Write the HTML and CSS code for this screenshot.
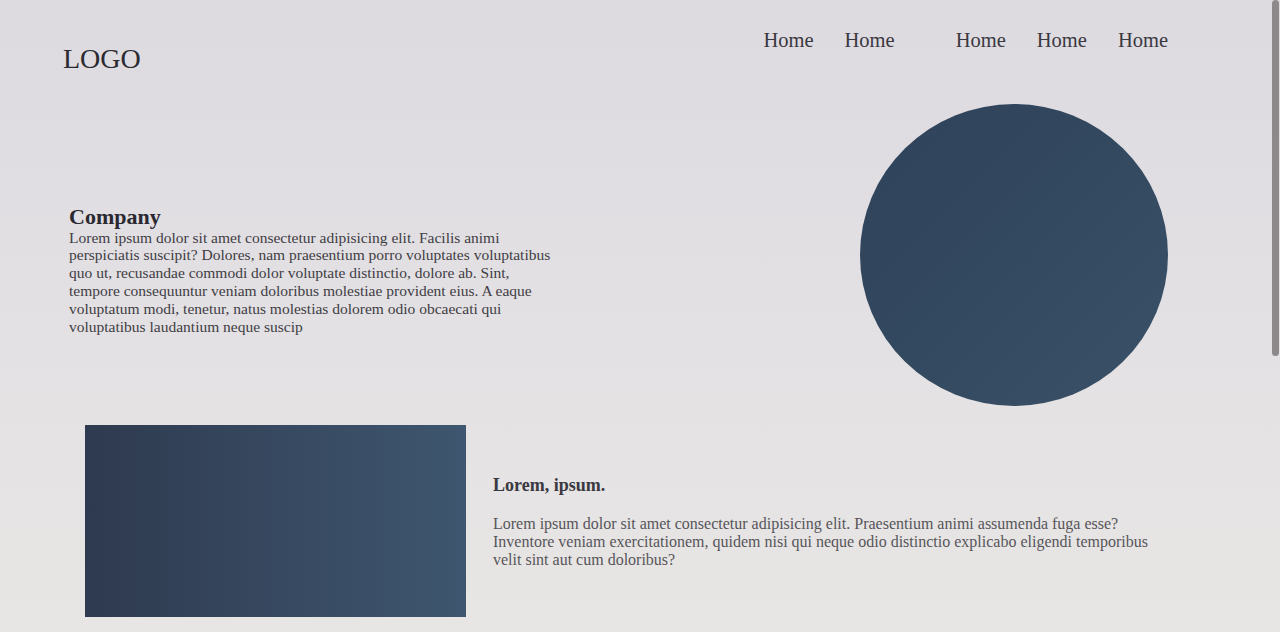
FILE: index.html
```html
<!DOCTYPE html>
<html lang="en">
<head>
<meta charset="utf-8">
<title>Company</title>
<link rel="stylesheet" href="styles.css">
</head>
<body>
  <header class="site-header">
    <div class="logo">LOGO</div>
    <nav class="nav">
      <a href="#">Home</a>
      <a href="#">Home</a>
      <a href="#" class="wide">Home</a>
      <a href="#">Home</a>
      <a href="#">Home</a>
    </nav>
  </header>

  <section class="hero">
    <div class="hero-text">
      <h2 class="company">Company</h2>
      <p class="hero-copy">Lorem ipsum dolor sit amet consectetur adipisicing elit. Facilis animi perspiciatis suscipit? Dolores, nam praesentium porro voluptates voluptatibus quo ut, recusandae commodi dolor voluptate distinctio, dolore ab. Sint, tempore consequuntur veniam doloribus molestiae provident eius. A eaque voluptatum modi, tenetur, natus molestias dolorem odio obcaecati qui voluptatibus laudantium neque suscip</p>
    </div>
    <div class="circle"></div>
  </section>

  <section class="feature">
    <div class="feature-box"></div>
    <div class="feature-text">
      <h3 class="feature-title">Lorem, ipsum.</h3>
      <p class="feature-copy">Lorem ipsum dolor sit amet consectetur adipisicing elit. Praesentium animi assumenda fuga esse? Inventore veniam exercitationem, quidem nisi qui neque odio distinctio explicabo eligendi temporibus velit sint aut cum doloribus?</p>
    </div>
  </section>

  <div class="scroll-thumb"></div>
</body>
</html>
```

FILE: styles.css
```css
html, body {
  margin: 0;
  padding: 0;
}

body {
  width: 1280px;
  height: 632px;
  overflow: hidden;
  font-family: "Liberation Serif", "Times New Roman", serif;
  color: #2d2b31;
  background: linear-gradient(180deg, #dddae0 0%, #e2e0e3 45%, #e8e6e4 100%);
}

.site-header {
  display: flex;
  justify-content: space-between;
  align-items: flex-start;
  padding: 22px 112px 0 63px;
  height: 84px;
  box-sizing: border-box;
}

.logo {
  font-size: 28px;
  margin-top: 21px;
  color: #2b2a30;
}

.nav {
  display: flex;
  gap: 31px;
  margin-top: 7px;
}

.nav a {
  font-size: 20.5px;
  color: #3a3840;
  text-decoration: none;
}

.nav a.wide {
  margin-left: 30px;
}

.hero {
  display: flex;
  justify-content: space-between;
  align-items: center;
  padding: 20px 112px 0 69px;
}

.hero-text {
  width: 485px;
  margin-top: 30px;
}

.company {
  font-size: 22px;
  font-weight: bold;
  margin: 0;
  line-height: 24px;
  color: #2a2830;
}

.hero-copy {
  margin: 0;
  font-size: 15.5px;
  line-height: 17.8px;
  color: #3f3d44;
}

.circle {
  width: 308px;
  height: 302px;
  border-radius: 50%;
  background: linear-gradient(135deg, #2f425b 0%, #33495f 50%, #3a5168 100%);
}

.feature {
  display: flex;
  align-items: center;
  gap: 27px;
  padding: 19px 0 0 85px;
}

.feature-box {
  width: 381px;
  height: 192px;
  background: linear-gradient(90deg, #2e3a4f 0%, #36475e 45%, #3e566f 100%);
}

.feature-text {
  width: 660px;
  padding-top: 2px;
}

.feature-title {
  font-size: 18px;
  font-weight: bold;
  margin: 0 0 19px;
  color: #3a3840;
}

.feature-copy {
  margin: 0;
  font-size: 16px;
  line-height: 18px;
  color: #57555a;
}

.scroll-thumb {
  position: fixed;
  top: 0;
  right: 1px;
  width: 7px;
  height: 356px;
  border-radius: 4px;
  background: #8d898b;
}
```
